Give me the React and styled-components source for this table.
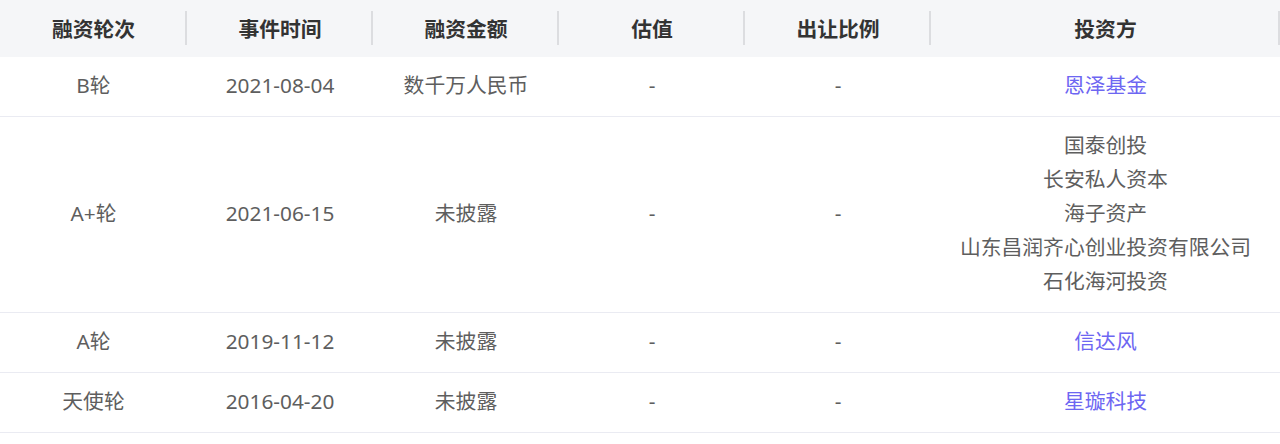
import styled, { createGlobalStyle } from "styled-components";

const GlobalStyle = createGlobalStyle`
    body {
        margin: 0;
        background: #ffffff;
        font-family: "Noto Sans", "Noto Sans CJK SC", sans-serif;
    }
`;

const columns = ["融资轮次", "事件时间", "融资金额", "估值", "出让比例", "投资方"];

const rounds = [
    { round: "B轮", date: "2021-08-04", amount: "数千万人民币", value: "-", ratio: "-", investors: [{ name: "恩泽基金", link: true }] },
    {
        round: "A+轮", date: "2021-06-15", amount: "未披露", value: "-", ratio: "-",
        investors: [
            { name: "国泰创投" },
            { name: "长安私人资本" },
            { name: "海子资产" },
            { name: "山东昌润齐心创业投资有限公司" },
            { name: "石化海河投资" },
        ],
    },
    { round: "A轮", date: "2019-11-12", amount: "未披露", value: "-", ratio: "-", investors: [{ name: "信达风", link: true }] },
    { round: "天使轮", date: "2016-04-20", amount: "未披露", value: "-", ratio: "-", investors: [{ name: "星璇科技", link: true }] },
];

export default function App() {
    return (
        <>
            <GlobalStyle />
            <Table>
                <colgroup>
                    <Col $w="187px" />
                    <Col $w="186px" />
                    <Col $w="186px" />
                    <Col $w="186px" />
                    <Col $w="186px" />
                    <Col />
                </colgroup>
                <thead>
                    <tr>
                        {columns.map((c) => (
                            <HeadCell key={c}>{c}</HeadCell>
                        ))}
                    </tr>
                </thead>
                <tbody>
                    {rounds.map((r) => (
                        <Row key={r.round}>
                            <Cell>{r.round}</Cell>
                            <Cell>{r.date}</Cell>
                            <Cell>{r.amount}</Cell>
                            <Cell>{r.value}</Cell>
                            <Cell>{r.ratio}</Cell>
                            <Cell>
                                {r.investors.map((inv) => (
                                    <Investor key={inv.name} $link={inv.link}>{inv.name}</Investor>
                                ))}
                            </Cell>
                        </Row>
                    ))}
                </tbody>
            </Table>
        </>
    );
}

const Table = styled.table`
    width: 1280px;
    border-collapse: collapse;
    table-layout: fixed;
    font-size: 20.8px;
`;

const Col = styled.col`
    width: ${(p) => p.$w || "auto"};
`;

const HeadCell = styled.th`
    position: relative;
    height: 56px;
    padding: 0 0 1px;
    background: #f5f6f8;
    color: #333333;
    font-weight: 700;
    text-align: center;
    vertical-align: middle;

    &::after {
        content: "";
        position: absolute;
        right: 0;
        top: 11px;
        bottom: 12px;
        width: 2px;
        background: #dcdde0;
    }
`;

const Row = styled.tr`
    border-bottom: 1px solid #eaebf2;
`;

const Cell = styled.td`
    padding: 11px 0 14px;
    text-align: center;
    vertical-align: middle;
    color: #5e5e5e;
    line-height: 34px;
`;

const Investor = styled.div`
    color: ${(p) => (p.$link ? "#6d66f2" : "#5e5e5e")};
    cursor: ${(p) => (p.$link ? "pointer" : "default")};
`;
